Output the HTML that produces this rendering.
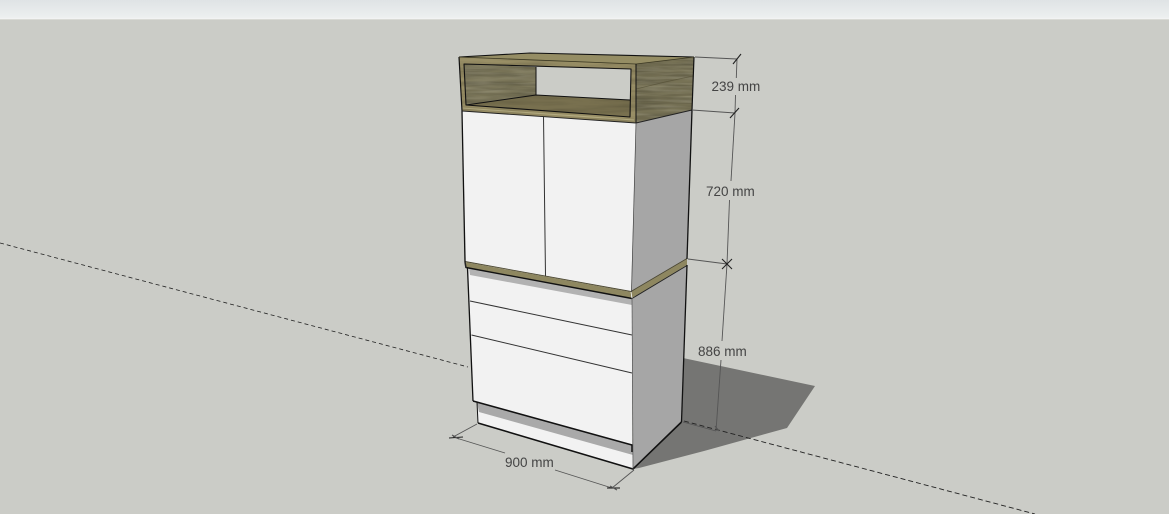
<!DOCTYPE html>
<html>
<head>
<meta charset="utf-8">
<style>
html,body{margin:0;padding:0;width:1169px;height:514px;overflow:hidden;background:#cbccc7}
svg{display:block;position:absolute;left:0;top:0}
text{font-family:"Liberation Sans",sans-serif;font-size:13.5px;fill:#444}
</style>
</head>
<body>
<svg width="1169" height="514" viewBox="0 0 1169 514" xmlns="http://www.w3.org/2000/svg">
<defs>
<linearGradient id="top" x1="0" y1="0" x2="0" y2="1">
<stop offset="0" stop-color="#dfe3e5"/><stop offset=".9" stop-color="#ecefef"/><stop offset="1" stop-color="#f4f5f5"/>
</linearGradient>
<filter id="wood" x="0" y="0" width="100%" height="100%">
<feTurbulence type="fractalNoise" baseFrequency="0.018 0.22" numOctaves="3" seed="4"/>
<feColorMatrix type="matrix" values="0 0 0 0 0  0 0 0 0 0  0 0 0 0 0  1.6 0 0 0 -0.55"/>
</filter>
<filter id="woodL" x="0" y="0" width="100%" height="100%">
<feTurbulence type="fractalNoise" baseFrequency="0.022 0.3" numOctaves="3" seed="11"/>
<feColorMatrix type="matrix" values="0 0 0 0 .72  0 0 0 0 .70  0 0 0 0 .58  1.8 0 0 0 -0.7"/>
</filter>
<clipPath id="cSide"><polygon points="636,64 694,57 692,110 636,123"/></clipPath>
<clipPath id="cLeft"><polygon points="464,64 536,67 536,95 466,105"/></clipPath>
<clipPath id="cFloor"><polygon points="466,105 536,95 630,100 630,117"/></clipPath>
<clipPath id="cFront"><path fill-rule="evenodd" clip-rule="evenodd" d="M459,57 L636,64 L636,123 L462,111 Z M464,64 L631,69 L630,117 L466,105 Z"/></clipPath>
</defs>

<rect width="1169" height="514" fill="#cbccc7"/>
<rect width="1169" height="19" fill="url(#top)"/>
<rect y="19" width="1169" height="1" fill="#d9dad5"/>

<!-- ground shadow -->
<polygon points="683,358 815,386 787,428 704,451 639,468 633,469 681,422" fill="#757573"/>

<!-- axis -->
<line x1="0" y1="243" x2="468" y2="367" stroke="#222" stroke-width=".8" stroke-dasharray="4 3"/>
<line x1="684" y1="421" x2="1035" y2="514" stroke="#222" stroke-width=".9" stroke-dasharray="5 3"/>

<!-- side -->
<polygon points="636,123 692,110 687,262 682,422 633,469 631,298" fill="#a6a6a6"/>

<!-- upper doors -->
<polygon points="462,111 636,123 631,292 466,264" fill="#f2f2f2"/>
<line x1="543.500" y1="116" x2="545.500" y2="276" stroke="#333" stroke-width="1"/>

<!-- lower drawers -->
<polygon points="468,267 632,298 632,445 473,401" fill="#f2f2f2"/>
<polygon points="469,268 632,298 632,305 470,275" fill="#b2b2b2"/>
<line x1="470" y1="301" x2="632" y2="335" stroke="#333" stroke-width="1"/>
<line x1="471.500" y1="335" x2="632" y2="373" stroke="#333" stroke-width="1"/>

<!-- toe kick -->
<polygon points="477,402 633,445 633,469 478,423" fill="#f2f2f2"/>
<polygon points="477,402 633,445 633,455 479,412" fill="#a9a9a9"/>

<!-- see-through back -->
<polygon points="536,67 631,69 630,101 536,95" fill="#cbccc7"/>

<!-- wood: top -->
<polygon points="459,57 530,53 694,57 636,64" fill="#958d64"/>

<!-- wood: front frame -->
<path fill-rule="evenodd" d="M459,57 L636,64 L636,123 L462,111 Z M464,64 L631,69 L630,117 L466,105 Z" fill="#998f66"/>
<g clip-path="url(#cFront)">
<rect x="455" y="55" width="185" height="72" filter="url(#wood)" opacity=".2"/>
<polyline points="462,108 634,120" stroke="#d2cb9f" stroke-width="1" fill="none" opacity=".5"/>
</g>

<!-- wood: inner left -->
<polygon points="464,64 536,67 536,95 466,105" fill="#7b7659"/>
<g clip-path="url(#cLeft)">
<rect x="460" y="60" width="80" height="50" filter="url(#wood)" opacity=".25"/>
<rect x="460" y="60" width="80" height="50" filter="url(#woodL)" opacity=".25"/>
</g>

<!-- wood: floor -->
<polygon points="466,105 536,95 630,100 630,117" fill="#78704f"/>
<g clip-path="url(#cFloor)"><rect x="460" y="90" width="175" height="30" filter="url(#wood)" opacity=".15"/></g>

<!-- wood: right side -->
<polygon points="636,64 694,57 692,110 636,123" fill="#777255"/>
<g clip-path="url(#cSide)">
<rect x="630" y="52" width="70" height="75" filter="url(#wood)" opacity=".28"/>
<rect x="630" y="52" width="70" height="75" filter="url(#woodL)" opacity=".28"/>
<polyline points="636,89 665,82 693,76" fill="none" stroke="#4f4a30" stroke-width=".8" opacity=".6"/>
</g>

<!-- wood lines -->
<g fill="none" stroke="#111" stroke-linejoin="round">
<polygon points="464,64 631,69 630,117 466,105" stroke-width="1.100"/>
<polyline points="536,67 536,95" stroke-width="1"/>
<polyline points="466,105 536,95 630,100" stroke-width="1"/>
<polyline points="459,57 530,53 694,57" stroke-width="1.100"/>
<polyline points="459,57 462,111" stroke-width="1.200"/>
<polyline points="694,57 692,110" stroke-width="1.200"/>
<polyline points="459,57 636,64" stroke-width=".8" stroke="#3a3722"/>
<polyline points="636,64 694,57" stroke-width=".8" stroke="#3a3722"/>
<polyline points="636,64 636,123" stroke-width="1"/>
<polyline points="462,111 636,123 692,110" stroke-width=".9" stroke="#222"/>
</g>

<!-- moulding -->
<polygon points="465,262 631,292 631,298 466,267" fill="#8e8760"/>
<polygon points="631,292 687,259 687,265 632,298" fill="#8e8760"/>
<polyline points="465,261.500 631,291.500 687,258.500" fill="none" stroke="#4a4630" stroke-width=".9"/>
<polyline points="466,267.500 632,298.500" fill="none" stroke="#111" stroke-width="1.400"/>
<polyline points="632,298.500 687,265.500" fill="none" stroke="#222" stroke-width=".9"/>
<line x1="465" y1="262" x2="466" y2="268" stroke="#222" stroke-width="1.500"/>
<line x1="631" y1="292" x2="632" y2="298" stroke="#f4f4f0" stroke-width=".8"/>

<!-- body outline -->
<g fill="none" stroke="#111" stroke-width="1.300" stroke-linejoin="round">
<line x1="462" y1="111" x2="465" y2="262"/>
<line x1="692" y1="110" x2="687" y2="259"/>
<line x1="687" y1="265" x2="681.500" y2="422"/>
<line x1="467.500" y1="268" x2="473" y2="401"/>
<polyline points="473,401 632,445 632,452" stroke-width="1.500"/>
<line x1="477" y1="402" x2="478" y2="423" stroke-width="1"/>
<polyline points="478,423 633,469 681.500,422" stroke-width="1.600"/>
</g>
<line x1="636" y1="123" x2="631.500" y2="292" stroke="#444" stroke-width=".7"/>
<line x1="632" y1="298" x2="633" y2="469" stroke="#555" stroke-width=".7"/>

<!-- dimensions -->
<g fill="none" stroke="#555" stroke-width=".9">
<line x1="695" y1="57" x2="737" y2="59"/>
<line x1="692" y1="110" x2="735" y2="113"/>
<line x1="737" y1="59" x2="736.300" y2="78"/>
<line x1="735.500" y1="95" x2="735" y2="113"/>
<line x1="735" y1="113" x2="731" y2="181"/>
<line x1="729.500" y1="200" x2="727" y2="264"/>
<line x1="688" y1="259" x2="727" y2="264"/>
<line x1="727" y1="264" x2="722" y2="341"/>
<line x1="721" y1="360" x2="716" y2="431"/>
<line x1="683" y1="422" x2="716" y2="431"/>
<line x1="477" y1="424" x2="453" y2="437"/>
<line x1="634" y1="470" x2="612" y2="488"/>
<line x1="453" y1="437" x2="505" y2="453"/>
<line x1="555" y1="470" x2="612" y2="488"/>
</g>
<g fill="none" stroke="#222" stroke-width="1.100">
<line x1="733" y1="64" x2="741" y2="54"/>
<line x1="730" y1="118" x2="739" y2="108"/>
<line x1="722" y1="259" x2="732" y2="269"/>
<line x1="722" y1="269" x2="732" y2="259"/>
<line x1="715" y1="426" x2="719" y2="431" stroke="#555"/>
<line x1="449" y1="438" x2="463" y2="437"/>
<line x1="452" y1="435" x2="459" y2="439" stroke="#555"/>
<line x1="607" y1="488" x2="620" y2="488"/>
<line x1="610" y1="486" x2="617" y2="490" stroke="#555"/>
</g>

<text x="711.500" y="91">239 mm</text>
<text x="706" y="196">720 mm</text>
<text x="698" y="356">886 mm</text>
<text x="505" y="467">900 mm</text>
</svg>
</body>
</html>
